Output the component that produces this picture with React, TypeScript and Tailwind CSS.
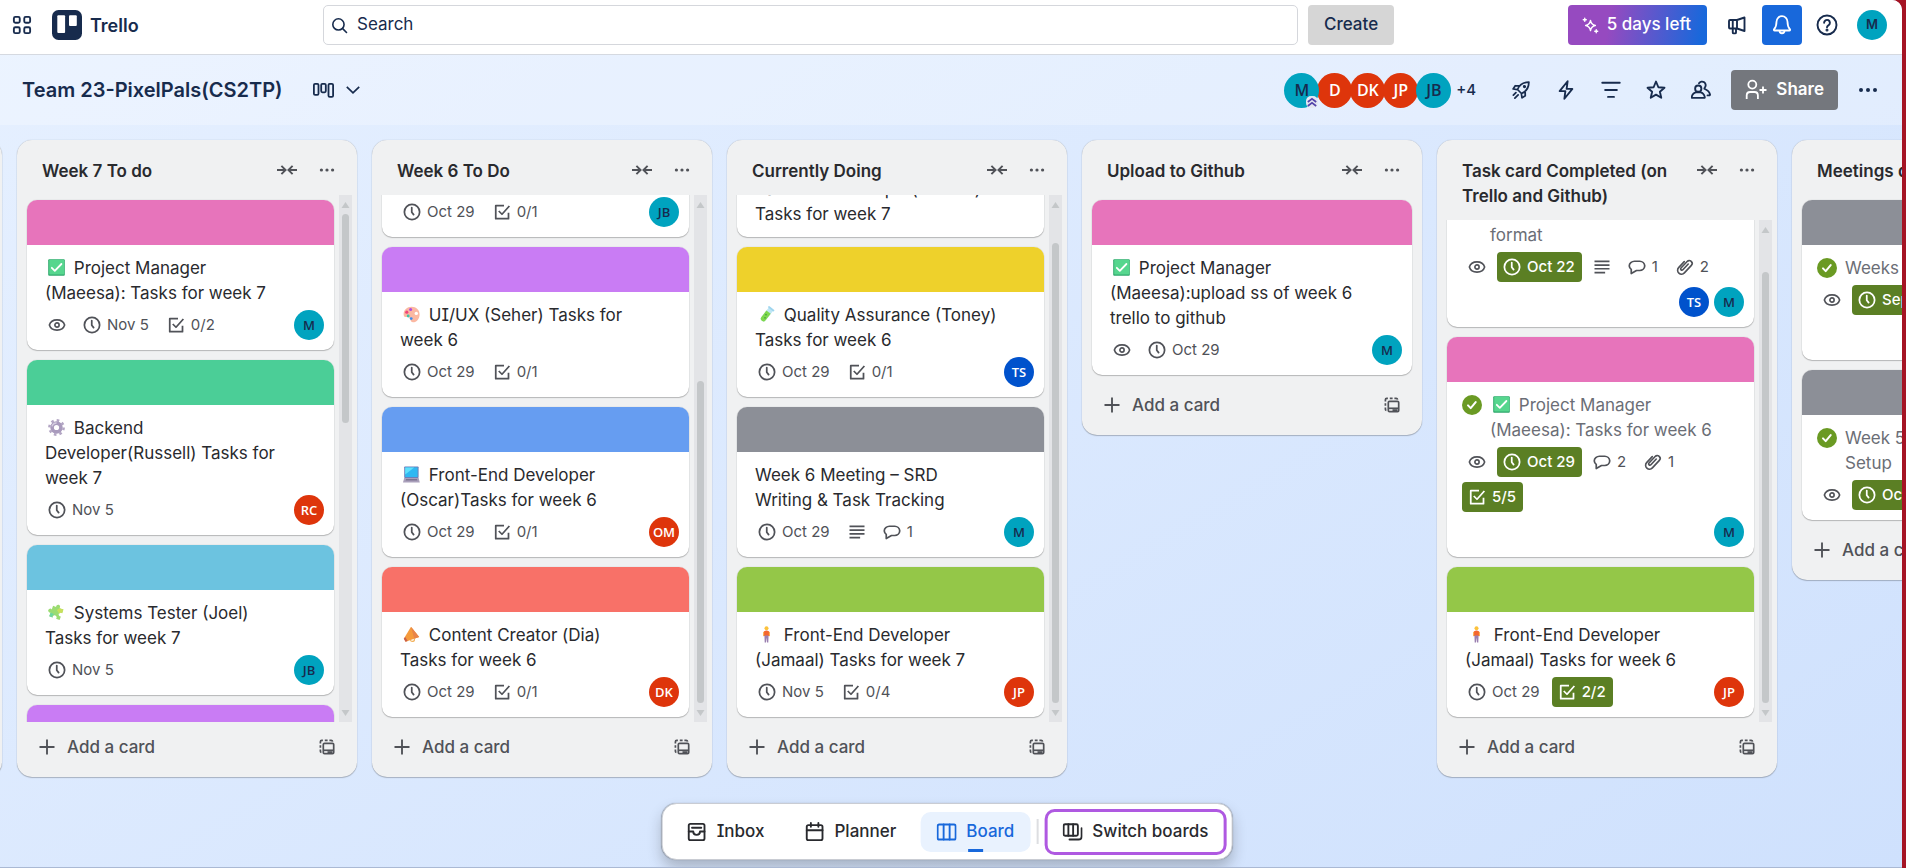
import React from "react";

type Tone = "teal" | "red" | "blue";
type Cover = "pink" | "green" | "sky" | "purple" | "blue" | "red" | "yellow" | "gray" | "lime";
type Kind = "watch" | "date" | "check" | "text" | "comment" | "attach";
type EmojiName = "tick" | "gear" | "puzzle" | "palette" | "laptop" | "horn" | "tube" | "person";

interface BadgeData {
  kind: Kind;
  label?: string;
  done?: boolean;
}
interface Member {
  initials: string;
  tone: Tone;
}
interface CardData {
  cover: Cover;
  emoji?: EmojiName;
  title?: string;
  complete?: boolean;
  badges?: BadgeData[];
  members?: Member[];
}
interface ListData {
  title: string;
  cards: CardData[];
  anchor?: "start" | "end";
  bar?: [number, number, number];
}

const toneClass: Record<Tone, string> = {
  teal: "bg-[#00a3bf] text-[#172b4d]",
  red: "bg-[#de350b] text-white",
  blue: "bg-[#0052cc] text-white",
};

const coverClass: Record<Cover, string> = {
  pink: "bg-[#e774bb]",
  green: "bg-[#4bce97]",
  sky: "bg-[#6cc3e0]",
  purple: "bg-[#c97cf4]",
  blue: "bg-[#669df1]",
  red: "bg-[#f87168]",
  yellow: "bg-[#eed12b]",
  gray: "bg-[#8c8f97]",
  lime: "bg-[#94c748]",
};

const M: Member = { initials: "M", tone: "teal" };
const JB: Member = { initials: "JB", tone: "teal" };
const RC: Member = { initials: "RC", tone: "red" };
const OM: Member = { initials: "OM", tone: "red" };
const DK: Member = { initials: "DK", tone: "red" };
const JP: Member = { initials: "JP", tone: "red" };
const TS: Member = { initials: "TS", tone: "blue" };

const watch: BadgeData = { kind: "watch" };
const date = (label: string, done = false): BadgeData => ({ kind: "date", label, done });
const check = (label: string, done = false): BadgeData => ({ kind: "check", label, done });
const comment = (label: string): BadgeData => ({ kind: "comment", label });
const attach = (label: string): BadgeData => ({ kind: "attach", label });

const lists: ListData[] = [
  {
    title: "Week 7 To do",
    bar: [0, 209, 280],
    cards: [
      { cover: "pink", emoji: "tick", title: "Project Manager (Maeesa): Tasks for week 7", badges: [watch, date("Nov 5"), check("0/2")], members: [M] },
      { cover: "green", emoji: "gear", title: "Backend Developer(Russell) Tasks for week 7", badges: [date("Nov 5")], members: [RC] },
      { cover: "sky", emoji: "puzzle", title: "Systems Tester (Joel) Tasks for week 7", badges: [date("Nov 5")], members: [JB] },
      { cover: "purple" },
    ],
  },
  {
    title: "Week 6 To Do",
    anchor: "end",
    bar: [167, 322, 0],
    cards: [
      { cover: "sky", badges: [date("Oct 29"), check("0/1")], members: [JB] },
      { cover: "purple", emoji: "palette", title: "UI/UX (Seher) Tasks for week 6", badges: [date("Oct 29"), check("0/1")] },
      { cover: "blue", emoji: "laptop", title: "Front-End Developer (Oscar)Tasks for week 6", badges: [date("Oct 29"), check("0/1")], members: [OM] },
      { cover: "red", emoji: "horn", title: "Content Creator (Dia) Tasks for week 6", badges: [date("Oct 29"), check("0/1")], members: [DK] },
    ],
  },
  {
    title: "Currently Doing",
    anchor: "end",
    bar: [29, 460, 0],
    cards: [
      { cover: "green", title: "Backend Developer(Russell) Tasks for week 7" },
      { cover: "yellow", emoji: "tube", title: "Quality Assurance (Toney) Tasks for week 6", badges: [date("Oct 29"), check("0/1")], members: [TS] },
      { cover: "gray", title: "Week 6 Meeting – SRD Writing & Task Tracking", badges: [date("Oct 29"), { kind: "text" }, comment("1")], members: [M] },
      { cover: "lime", emoji: "person", title: "Front-End Developer (Jamaal) Tasks for week 7", badges: [date("Nov 5"), check("0/4")], members: [JP] },
    ],
  },
  {
    title: "Upload to Github",
    cards: [
      { cover: "pink", emoji: "tick", title: "Project Manager (Maeesa):upload ss of week 6 trello to github", badges: [watch, date("Oct 29")], members: [M] },
    ],
  },
  {
    title: "Task card Completed (on Trello and Github)",
    anchor: "end",
    bar: [33, 431, 0],
    cards: [
      { cover: "gray", complete: true, title: "\nformat", badges: [watch, date("Oct 22", true), { kind: "text" }, comment("1"), attach("2")], members: [TS, M] },
      { cover: "pink", complete: true, emoji: "tick", title: "Project Manager (Maeesa): Tasks for week 6", badges: [watch, date("Oct 29", true), comment("2"), attach("1"), check("5/5", true)], members: [M] },
      { cover: "lime", emoji: "person", title: "Front-End Developer (Jamaal) Tasks for week 6", badges: [date("Oct 29"), check("2/2", true)], members: [JP] },
    ],
  },
  {
    title: "Meetings documentation",
    cards: [
      { cover: "gray", complete: true, title: "Weeks 1-2 Meeting", badges: [watch, date("Sep 29", true), { kind: "text" }, comment("1"), attach("1")], members: [TS, M] },
      { cover: "gray", complete: true, title: "Week 5 Meeting\nSetup", badges: [watch, date("Oct 22", true)], members: [M] },
    ],
  },
];

function Stroke({ className = "size-5", width = 1.5, children }: { className?: string; width?: number; children: React.ReactNode }) {
  return (
    <svg viewBox="0 0 16 16" className={`shrink-0 ${className}`} fill="none" stroke="currentColor" strokeWidth={width} strokeLinecap="round" strokeLinejoin="round" aria-hidden="true">
      {children}
    </svg>
  );
}

function BadgeIcon({ kind }: { kind: Kind }) {
  switch (kind) {
    case "watch":
      return (
        <Stroke width={1.3}>
          <path d="M1.9 8C2.7 5.3 5.2 3.9 8 3.9s5.3 1.4 6.1 4.1c-.8 2.7-3.3 4.1-6.1 4.1S2.700 10.700 1.900 8z" />
          <circle cx="8" cy="8" r="1.7" />
        </Stroke>
      );
    case "date":
      return (
        <Stroke width={1.4}>
          <circle cx="8" cy="8" r="6.1" />
          <path d="M7.8 4.4v3.8l1.5 1.9" />
        </Stroke>
      );
    case "check":
      return (
        <Stroke width={1.4}>
          <path d="M9.6 2.9H3v10.4h10.2V8.6" strokeLinecap="butt" />
          <path d="M5.4 7.2 8 9.8l5.9-6.6" strokeLinecap="butt" />
        </Stroke>
      );
    case "text":
      return (
        <Stroke width={1.4}>
          <path d="M2 3.4h12M2 6.4h12M2 9.4h12M2 12.4h8.5" strokeLinecap="butt" />
        </Stroke>
      );
    case "comment":
      return (
        <Stroke width={1.35}>
          <path d="M6 3.4h4.2a4 4 0 0 1 4 3.7 4 4 0 0 1-4 3.7H7.6L3.4 13.2v-3.3A3.8 3.8 0 0 1 1.8 7.1C1.8 5 3.7 3.4 6 3.4z" />
        </Stroke>
      );
    case "attach":
      return (
        <Stroke width={1.3}>
          <path d="M10.6 5.6 6.3 10.2a1 1 0 0 1-1.5-1.4l4.9-5.2a2.3 2.3 0 0 1 3.4 3.1l-5.6 6a3.1 3.1 0 0 1-4.6-4.2L7.4 3.7" />
        </Stroke>
      );
  }
}

function Emoji({ name }: { name: EmojiName }) {
  const art: Record<EmojiName, React.ReactNode> = {
    tick: (
      <>
        <rect x=".2" y=".2" width="16.6" height="16.6" rx="1" fill="#2fa86c" />
        <rect x="1.2" y=".8" width="15" height="14.6" rx=".6" fill="#56d68e" />
        <path d="m3.8 8.8 3 3L13.4 5" fill="none" stroke="#fff" strokeWidth="1.8" strokeLinecap="round" strokeLinejoin="round" />
      </>
    ),
    gear: (
      <>
        <circle cx="8.5" cy="8.5" r="7.2" fill="none" stroke="#b3a6c4" strokeWidth="2.4" strokeDasharray="2.6 3.05" />
        <circle cx="8.5" cy="8.5" r="4.4" fill="none" stroke="#a99bbd" strokeWidth="3.6" />
        <path d="M4 7.4A4.7 4.7 0 0 1 8.6 4" fill="none" stroke="#d5cde0" strokeWidth="1.4" />
      </>
    ),
    puzzle: (
      <g transform="rotate(20 8.5 8.5)">
        <path d="M3 3.4h3.2a2 2 0 1 1 3.6 0H14v3.8a2 2 0 1 0 0 3.6V14.6h-3.8a2 2 0 1 0-3.6 0H3v-4a2 2 0 1 1 0-3.4z" fill="#9bdc72" />
        <path d="M9.8 3.4H14v3.8a2 2 0 0 0-2.4 1.6L8 6z" fill="#c8e05c" />
        <path d="M3 10.6v4h3.6A2 2 0 0 1 8 11z" fill="#6fd6a0" />
      </g>
    ),
    palette: (
      <>
        <path d="M8.6.8C4 .8.6 4 .6 8.2c0 2.4 1.4 3.2 3 2.8 1.8-.4 3.4.4 3.8 2.4.4 1.8 1 2.8 2.6 2.8 3.8 0 6.6-3.6 6.6-7.8C16.6 4 13.2.8 8.6.8z" fill="#fbb8a2" />
        <circle cx="13.3" cy="7.4" r="1.7" fill="#fff" />
        <circle cx="3.8" cy="6.2" r="1.6" fill="#f0467a" />
        <circle cx="7.6" cy="3.6" r="1.5" fill="#b04be0" />
        <circle cx="5.2" cy="10" r="1.4" fill="#3cc4a8" />
        <circle cx="8.2" cy="12.6" r="1.4" fill="#3b8cf0" />
      </>
    ),
    laptop: (
      <>
        <rect x="1.2" y=".4" width="14.4" height="11.6" rx=".8" fill="#6b7fb8" />
        <rect x="2.2" y="1.4" width="12.4" height="9.6" fill="#2fb8f2" />
        <path d="M2.2 1.4h9l-9 7z" fill="#5fe0fb" />
        <path d="M1.2 12h14.4l1.2 4.4H0z" fill="#aaa0bb" />
        <path d="M3 13h11l.4 1.4H2.6z" fill="#7c7391" />
      </>
    ),
    horn: (
      <>
        <path d="M8 .8 16.2 11 2.6 15.8.8 12.8z" fill="#f59a3c" />
        <path d="M8 .8 16.2 11l-5 1.8z" fill="#e8844a" />
        <path d="M.8 12.8 2.6 15.8l2-.8-2.4-4z" fill="#c95f4a" />
        <path d="M7.4 13.8c.6 2.6 4.6 2 4-1" fill="none" stroke="#f2b25c" strokeWidth="1.2" />
      </>
    ),
    tube: (
      <g transform="rotate(38 8.5 8.5)">
        <path d="M6 1h5.4v12.6a2.7 2.7 0 0 1-5.4 0z" fill="#bfe6f5" />
        <path d="M6 5.4h5.4v8.2a2.7 2.7 0 0 1-5.4 0z" fill="#7fd84e" />
        <rect x="5" y=".2" width="7.4" height="1.8" rx=".9" fill="#9fd5ee" />
        <circle cx="8.2" cy="9" r=".8" fill="#3f9e3f" />
        <circle cx="9.4" cy="12" r=".8" fill="#3f9e3f" />
      </g>
    ),
    person: (
      <>
        <circle cx="8.5" cy="2.3" r="2" fill="#fbc23c" />
        <path d="M5.8 5.4q2.7-1.6 5.400 0L11.4 10H5.6z" fill="#f4662e" />
        <path d="M5.6 6v4.2M11.4 6v4.2" stroke="#fbb04c" strokeWidth="1" />
        <path d="M6.4 9.6h4.2l-.3 7H9l-.5-5-.5 5H6.7z" fill="#9a7fb0" />
      </>
    ),
  };
  return (
    <svg viewBox="0 0 17 17" className="mr-[4px] ml-[3px] inline-block size-[17px] align-[-2px]" aria-hidden="true">
      {art[name]}
    </svg>
  );
}

function Badge({ badge }: { badge: BadgeData }) {
  const look = badge.done ? "bg-[#5b7f24] font-medium text-white" : "text-[#505258]";
  return (
    <span className={`flex h-[30px] items-center gap-[5px] rounded-[4px] pl-[5px] text-[15px] leading-5 ${badge.label ? "pr-[7px]" : "pr-[5px]"} ${look}`}>
      <BadgeIcon kind={badge.kind} />
      {badge.label && <span>{badge.label}</span>}
    </span>
  );
}

function CardAvatar({ member }: { member: Member }) {
  return (
    <span className={`flex size-[30px] items-center justify-center rounded-full font-['Open_Sans',sans-serif] text-[13px] leading-none font-semibold ${toneClass[member.tone]}`}>
      {member.initials}
    </span>
  );
}

function Card({ card }: { card: CardData }) {
  return (
    <li className="shrink-0 overflow-hidden rounded-[10px] bg-white shadow-[0_1px_1px_#1e1f2140,0_0_1px_#1e1f214f]">
      <div className={`h-[45px] ${coverClass[card.cover]}`} />
      <div className="flex flex-col gap-1 pt-[11px] pr-[10px] pb-[10px] pl-[15px]">
        {card.title && (
          <div className={`flex gap-2 ${card.complete ? "pr-5 text-[#6b6e76]" : "pr-9 pl-[3px] text-[#292a2e]"}`}>
            {card.complete && (
              <svg viewBox="0 0 20 20" className="mt-[2px] size-5 shrink-0" aria-hidden="true">
                <circle cx="10" cy="10" r="10" fill="#6a9a23" />
                <path d="m6 10.4 2.700 2.700 5-6" fill="none" stroke="#fff" strokeWidth="2" strokeLinecap="round" strokeLinejoin="round" />
              </svg>
            )}
            <a href="#card" className="min-w-0 flex-1 text-[17px] leading-[25px] whitespace-pre-line">
              {card.emoji && <Emoji name={card.emoji} />}
              {card.emoji && " "}
              {card.title}
            </a>
          </div>
        )}
        {card.badges && (
          <div className="flex flex-wrap gap-[5px]">
            <div className="flex flex-wrap gap-[5px]">
              {card.badges.map((b, i) => (
                <Badge key={i} badge={b} />
              ))}
            </div>
            {card.members && (
              <div className="ml-auto flex gap-[5px]">
                {card.members.map((m) => (
                  <CardAvatar key={m.initials} member={m} />
                ))}
              </div>
            )}
          </div>
        )}
      </div>
    </li>
  );
}

function Dots({ className }: { className: string }) {
  return (
    <svg viewBox="0 0 20 20" className={className} fill="currentColor" aria-hidden="true">
      <circle cx="3" cy="10" r="2" />
      <circle cx="10" cy="10" r="2" />
      <circle cx="17" cy="10" r="2" />
    </svg>
  );
}

function ScrollBar({ parts }: { parts: [number, number, number] }) {
  return (
    <div className="flex w-[13px] shrink-0 flex-col items-center bg-[#e3e4e7]" aria-hidden="true">
      <svg viewBox="0 0 13 19" className="h-[19px] w-[13px] shrink-0">
        <path d="M6.5 7 10.5 13h-8z" fill="#c4c7c9" />
      </svg>
      <div style={{ flexGrow: parts[0] }} />
      <div className="w-[7px] rounded-full bg-[#c4c7c9]" style={{ flexGrow: parts[1] }} />
      <div style={{ flexGrow: parts[2] }} />
      <svg viewBox="0 0 13 19" className="h-[19px] w-[13px] shrink-0">
        <path d="M6.5 13 2.5 7h8z" fill="#c4c7c9" />
      </svg>
    </div>
  );
}

function List({ list }: { list: ListData }) {
  return (
    <section className="flex max-h-full w-[340px] shrink-0 flex-col rounded-[15px] bg-[#f0f1f2] shadow-[0_1px_1px_#1e1f2140,0_0_1px_#1e1f214f]">
      <header className="flex shrink-0 items-start pr-[10px] pl-[25px]">
        <h2 className="min-w-0 flex-1 pt-[19px] pb-[11px] text-[17px] leading-[25px] font-semibold text-[#292a2e]">{list.title}</h2>
        <button aria-label="Collapse list" className="mt-[10px] flex size-10 shrink-0 items-center justify-center text-[#505258]">
          <svg viewBox="0 0 20 20" className="size-5" fill="none" stroke="currentColor" strokeWidth="1.9" aria-hidden="true">
            <path d="M0 10h8.2M4.400 5.800 8.600 10l-4.200 4.200M20 10h-8.200M15.600 5.800 11.400 10l4.200 4.200" />
          </svg>
        </button>
        <button aria-label="List actions" className="mt-[10px] flex size-10 shrink-0 items-center justify-center text-[#505258]">
          <Dots className="size-4" />
        </button>
      </header>
      <div className="mx-[5px] flex min-h-0 overflow-hidden">
        <ol className={`flex min-w-0 flex-1 flex-col gap-[10px] overflow-hidden p-[5px] ${list.anchor === "end" ? "justify-end" : "justify-start"}`}>
          {list.cards.map((c, i) => (
            <Card key={i} card={c} />
          ))}
        </ol>
        {list.bar && <ScrollBar parts={list.bar} />}
      </div>
      <footer className="flex shrink-0 px-[10px] pt-[5px] pb-[10px] text-[#505258]">
        <button className="flex h-10 flex-1 items-center gap-[10px] pl-[10px] text-[17px] leading-[25px] font-medium">
          <Stroke width={1.5}>
            <path d="M8 2v12M2 8h12" strokeLinecap="butt" />
          </Stroke>
          Add a card
        </button>
        <button aria-label="Create from template" className="flex size-10 items-center justify-center">
          <svg viewBox="0 0 20 20" className="size-5" fill="none" stroke="currentColor" strokeWidth="1.7" aria-hidden="true">
            <rect x="6.3" y="6.3" width="10.4" height="10.4" rx="1.2" />
            <path d="M7 13.3h9" />
            <path d="M10.5 14.2h5v2h-5z" fill="currentColor" stroke="none" />
            <path d="M3.4 6.5V4.7q0-1.3 1.3-1.3h1.2M7.8 3.4h2.8M12.4 3.4h1.8q1.2 0 1.4 1.2M3.4 8.2v2.6M3.4 12.6v1.6q0 1 1 1.3" />
          </svg>
        </button>
      </footer>
    </section>
  );
}

function IconButton({ label, active, children }: { label: string; active?: boolean; children: React.ReactNode }) {
  return (
    <button aria-label={label} className={`flex size-10 shrink-0 items-center justify-center rounded-[4px] ${active ? "bg-[#1868db] text-white" : "text-[#172b4d]"}`}>
      {children}
    </button>
  );
}

function TopBar() {
  return (
    <header className="flex h-[55px] shrink-0 items-center border-b border-[#d5d9e0] bg-white pr-[15px] pb-1 text-[#172b4d]">
      <div className="flex w-[323px] items-center pl-[2px]">
        <IconButton label="Switch app">
          <Stroke width={1.5}>
            <rect x="1.5" y="1.5" width="4.7" height="4.7" rx="1.2" />
            <rect x="9.8" y="1.5" width="4.7" height="4.7" rx="1.2" />
            <rect x="1.5" y="9.8" width="4.7" height="4.7" rx="1.2" />
            <rect x="9.8" y="9.8" width="4.7" height="4.7" rx="1.2" />
          </Stroke>
        </IconButton>
        <a href="#home" className="ml-[10px] flex items-center gap-2 text-[18px] font-semibold">
          <svg viewBox="0 0 30 30" className="size-[30px]" aria-hidden="true">
            <rect width="30" height="30" rx="6.5" fill="#172b4d" />
            <rect x="5.3" y="5.3" width="7.8" height="17.7" rx="1" fill="#fff" />
            <rect x="17" y="5.3" width="7.8" height="10.7" rx="1" fill="#fff" />
          </svg>
          Trello
        </a>
      </div>
      <label className="flex h-10 max-w-[975px] flex-1 items-center gap-[9px] rounded-[5px] border border-[#d5d7dc] px-[7px]">
        <Stroke className="size-[17px]" width={1.5}>
          <circle cx="7" cy="7" r="5.3" />
          <path d="m11 11 3.6 3.6" />
        </Stroke>
        <input aria-label="Search" placeholder="Search" className="min-w-0 flex-1 bg-transparent text-[17px] outline-none placeholder:text-[#172b4d]" />
      </label>
      <button className="ml-[10px] h-10 rounded-[4px] bg-[#d6d6d6] px-4 text-[17px] font-medium">Create</button>
      <div className="ml-auto flex items-center gap-[5px]">
        <button className="mr-[5px] flex h-10 items-center gap-2 rounded-[4px] bg-[linear-gradient(100deg,#964ac0_30%,#1868db_95%)] pr-4 pl-[14px] text-[17px] font-medium text-white">
          <Stroke className="size-[17px]" width={1.3}>
            <path d="M8 3.2c.5 3 1.6 4.2 4.6 4.8-3 .6-4.100 1.800-4.600 4.800-.5-3-1.600-4.200-4.600-4.800 3-.6 4.100-1.800 4.600-4.800z" />
            <path d="M2.600 1.200v2.800M1.200 2.600h2.800M13.400 12v2.800M12 13.400h2.800" />
          </Stroke>
          5 days left
        </button>
        <IconButton label="Share feedback">
          <Stroke width={1.5}>
            <path d="M8 4v6.8M1.6 4.8q0-.8.8-.8H8l6-2v10.8l-6-2H2.400q-.8 0-.8-.8zM4.600 10.900v3q0 .8.8.8h1q.8 0 .8-.8V11M4.600 4.200v6.400" />
          </Stroke>
        </IconButton>
        <IconButton label="Notifications" active>
          <Stroke className="size-[22px]" width={1.3}>
            <path d="M8 1.600a4 4 0 0 0-4 4c0 3-.6 4.200-1.700 5.400-.4.5-.2 1 .4 1h10.600c.6 0 .8-.5.4-1C12.600 9.800 12 8.600 12 5.600a4 4 0 0 0-4-4z" />
            <path d="M6.200 12.200a1.800 1.800 0 0 0 3.600 0" />
          </Stroke>
        </IconButton>
        <IconButton label="Information">
          <Stroke className="size-[22px]" width={1.4}>
            <circle cx="8" cy="8" r="6.9" />
            <path d="M5.900 6.400a2.100 2.100 0 1 1 3.300 1.700C8.400 8.600 8 8.900 8 9.700" />
            <circle cx="8" cy="11.7" r=".4" fill="currentColor" />
          </Stroke>
        </IconButton>
        <button className="ml-[5px] flex size-[30px] items-center justify-center rounded-full bg-[#00a3bf] text-[13px] font-semibold">M</button>
      </div>
    </header>
  );
}

const boardMembers: Member[] = [M, { initials: "D", tone: "red" }, DK, JP, JB];

function BoardHeader() {
  return (
    <div className="flex h-[70px] shrink-0 items-center bg-white/25 pr-[14px] pl-[22px] text-[#172b4d]">
      <h1 className="text-[20px] leading-[25px] font-semibold">Team 23-PixelPals(CS2TP)</h1>
      <button aria-label="Board views" className="ml-[30px] flex h-10 items-center gap-3">
        <svg viewBox="0 0 21 16" className="h-4 w-[21px]" fill="none" stroke="currentColor" strokeWidth="1.8" aria-hidden="true">
          <rect x=".9" y="1.9" width="4.6" height="11" rx="1.2" />
          <rect x="8.2" y="1.9" width="4.6" height="8.4" rx="1.2" />
          <rect x="15.5" y="1.9" width="4.6" height="13" rx="1.2" />
        </svg>
        <svg viewBox="0 0 14 8" className="h-2 w-[14px]" fill="none" stroke="currentColor" strokeWidth="1.7" aria-hidden="true">
          <path d="m.8.8 6.2 6 6.2-6" />
        </svg>
      </button>
      <div className="ml-auto flex items-center">
        {boardMembers.map((m, i) => (
          <button
            key={m.initials}
            className={`relative flex size-[35px] items-center justify-center rounded-full font-['Open_Sans',sans-serif] text-[16px] leading-none font-semibold ${i > 0 ? "-ml-[2px]" : "z-10"} ${toneClass[m.tone]}`}
          >
            {m.initials}
            {i === 0 && (
              <svg viewBox="0 0 12 12" className="absolute right-[1px] bottom-0 size-3" aria-hidden="true">
                <rect width="12" height="12" rx="5" fill="#e4e6f2" />
                <path d="M1.800 6 6 2.800 10.200 6M1.800 10 6 6.800l4.200 3.200" fill="none" stroke="#5243aa" strokeWidth="1.700" />
              </svg>
            )}
          </button>
        ))}
        <button className="ml-[5px] w-[45px] text-left text-[15px] font-medium">+4</button>
      </div>
      <div className="flex items-center gap-[5px]">
        <IconButton label="Power-Ups">
          <Stroke width={1.4}>
            <path d="M5.200 7.600C6.600 4.200 9.300 1.900 14.300 1.700c-.1 5-2.500 7.700-5.900 9.100zM7 4.700 3.400 4.600 1.700 7.200l3.500.5M11.300 9l.1 3.600-2.600 1.700-.5-3.500M3.900 10.100l-2 2M5.700 11.900l-2.600 2.600" />
            <circle cx="10.8" cy="5.2" r=".6" fill="currentColor" />
          </Stroke>
        </IconButton>
        <IconButton label="Automation">
          <Stroke width={1.5}>
            <path d="M9.300 1 2.900 8.900h4.600L6.700 15l6.400-7.900H8.500z" />
          </Stroke>
        </IconButton>
        <IconButton label="Filters">
          <Stroke width={1.5}>
            <path d="M1 2.200h14M3.300 8h9.400M5.600 13.500h4.800" />
          </Stroke>
        </IconButton>
        <IconButton label="Star board">
          <Stroke width={1.5}>
            <path d="m8 1.200 1.900 4.600 4.900.4-3.700 3.200 1.100 4.800L8 11.700l-4.200 2.500 1.100-4.800-3.700-3.200 4.900-.4z" />
          </Stroke>
        </IconButton>
        <IconButton label="Workspace visible">
          <Stroke width={1.5}>
            <path d="M1 14.300c-.4 0-.5-.4-.4-.8.500-2 1.600-3.300 3.300-3.600h3.800c1.700.3 2.800 1.600 3.300 3.600.1.400 0 .8-.4.800z" />
            <circle cx="5.8" cy="6.9" r="2.5" />
            <path d="M6.400 2.600a2.900 2.900 0 1 1 4.600 3.500c-.4.300-.4.900.1 1.100 2.100.9 3.600 2 4.100 4.300.1.500-.2.800-.7.800h-1.300" />
          </Stroke>
        </IconButton>
        <button className="mr-[5px] ml-[5px] flex h-10 items-center gap-[9px] rounded-[4px] bg-[#74777d] px-[14px] text-[17px] font-semibold text-white">
          <svg viewBox="0 0 22 22" className="size-[22px]" fill="none" stroke="currentColor" strokeWidth="1.8" aria-hidden="true">
            <circle cx="7.3" cy="5.6" r="4" />
            <path d="M1.700 20v-3.600q0-3.400 3.400-3.400h4.400q3.400 0 3.400 3.400V20M14.500 11h7M18 7.500v7" />
          </svg>
          Share
        </button>
        <IconButton label="Menu">
          <Dots className="size-5" />
        </IconButton>
      </div>
    </div>
  );
}

function Dock() {
  const item = "flex h-10 items-center gap-[10px] rounded-[10px] px-4 text-[17px] font-medium";
  return (
    <nav className="absolute bottom-[7px] left-1/2 -ml-1 flex h-[57px] -translate-x-1/2 items-center rounded-[15px] border border-[#c9ccd3] bg-white pr-[5px] pl-2 whitespace-nowrap text-[#292a2e] shadow-[0_8px_14px_#1e1f2140,0_0_1px_#1e1f214f]">
      <button className={item}>
        <Stroke width={1.5}>
          <rect x="1.7" y="1.5" width="12.6" height="13" rx="1.3" />
          <path d="M4.300 4.600h7.400M1.700 7.600h3.600c0 3.600 5.400 3.600 5.400 0h3.600" />
        </Stroke>
        Inbox
      </button>
      <button className={`ml-2 ${item}`}>
        <Stroke width={1.5}>
          <rect x="1.7" y="2.5" width="12.6" height="12" rx="1.3" />
          <path d="M1.700 6.600h12.600M5 .8v3M11 .8v3" />
        </Stroke>
        Planner
      </button>
      <button aria-current="page" className={`relative ml-2 bg-[#e9f2fe] text-[#1868db] ${item}`}>
        <Stroke width={1.5}>
          <rect x=".8" y="2" width="14.4" height="12" rx="1.3" />
          <path d="M5.600 2v12M10.400 2v12" />
        </Stroke>
        Board
        <span className="absolute bottom-0 left-1/2 h-[3px] w-[15px] -translate-x-1/2 bg-[#1868db]" />
      </button>
      <span className="mx-[6px] h-[25px] w-[2px] bg-[#dddee1]" />
      <button className="flex h-[46px] items-center gap-[10px] rounded-[10px] border-[3px] border-[#af59e1] px-[15px] text-[17px] font-medium">
        <Stroke width={1.5}>
          <rect x=".8" y="1.8" width="11.4" height="9.2" rx="1.2" />
          <path d="M4.600 1.800V11M8.400 1.800V11M15.200 5v6.500q0 2.500-2.500 2.500H5.500" />
        </Stroke>
        Switch boards
      </button>
    </nav>
  );
}

export default function App() {
  return (
    <div className="h-screen bg-[#a51424] pr-1 font-['Inter',sans-serif] [font-feature-settings:'cv08']">
      <div className="relative flex h-full flex-col overflow-hidden rounded-tr-[10px] border-b border-[#aab9d4] bg-[linear-gradient(150deg,#e6f0ff,#cfe1fd)]">
        <TopBar />
        <BoardHeader />
        <main className="flex min-h-0 flex-1 items-start gap-[15px] overflow-hidden pt-[15px] pb-[90px]">
          <div className="-ml-[338px] h-full w-[340px] shrink-0 rounded-[15px] bg-[#f0f1f2] shadow-[0_1px_1px_#1e1f2140,0_0_1px_#1e1f214f]" />
          {lists.map((l) => (
            <List key={l.title} list={l} />
          ))}
        </main>
        <Dock />
      </div>
    </div>
  );
}
